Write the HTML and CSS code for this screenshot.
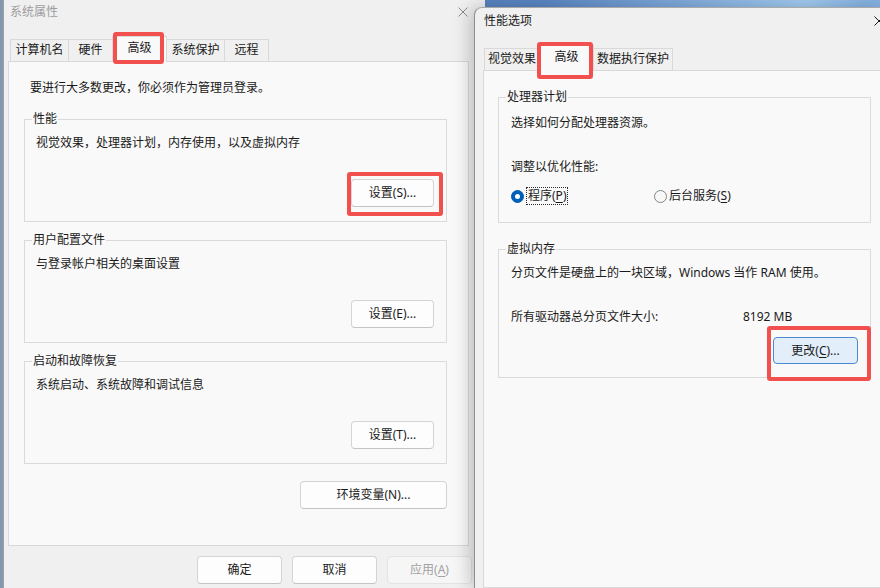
FILE: index.html
```html
<!DOCTYPE html>
<html lang="zh-CN">
<head>
<meta charset="utf-8">
<title>系统属性</title>
<link rel="stylesheet" href="styles.css">
</head>
<body>
<div class="desktop">
  <section class="window win-left">
    <header class="titlebar inactive">
      <span class="title">系统属性</span>
      <svg class="close" width="10" height="10" viewBox="0 0 10 10"><path d="M0.5 0.5 L9.5 9.5 M9.5 0.5 L0.5 9.5" stroke="#8c8c8c" stroke-width="1" fill="none"/></svg>
    </header>
    <nav class="tabs">
      <div class="tab">计算机名</div>
      <div class="tab">硬件</div>
      <div class="tab active">高级</div>
      <div class="tab">系统保护</div>
      <div class="tab">远程</div>
    </nav>
    <div class="panel panel-left">
      <p class="note">要进行大多数更改，你必须作为管理员登录。</p>
      <div class="group group-left">
        <span class="legend">性能</span>
        <p class="desc">视觉效果，处理器计划，内存使用，以及虚拟内存</p>
        <button class="btn btn-set">设置(S)...</button>
      </div>
      <div class="group group-left">
        <span class="legend">用户配置文件</span>
        <p class="desc">与登录帐户相关的桌面设置</p>
        <button class="btn btn-set">设置(E)...</button>
      </div>
      <div class="group group-left">
        <span class="legend">启动和故障恢复</span>
        <p class="desc">系统启动、系统故障和调试信息</p>
        <button class="btn btn-set">设置(T)...</button>
      </div>
      <div class="env-row">
        <button class="btn btn-env">环境变量(N)...</button>
      </div>
    </div>
    <div class="dialog-buttons">
      <button class="btn btn-dlg">确定</button>
      <button class="btn btn-dlg">取消</button>
      <button class="btn btn-dlg disabled">应用(<u>A</u>)</button>
    </div>
  </section>

  <section class="window win-right">
    <header class="titlebar">
      <span class="title">性能选项</span>
      <svg class="close" width="10" height="10" viewBox="0 0 10 10"><path d="M0.5 0.5 L9.5 9.5 M9.5 0.5 L0.5 9.5" stroke="#1a1a1a" stroke-width="1" fill="none"/></svg>
    </header>
    <nav class="tabs">
      <div class="tab">视觉效果</div>
      <div class="tab active">高级</div>
      <div class="tab">数据执行保护</div>
    </nav>
    <div class="panel panel-right">
      <div class="group group-cpu">
        <span class="legend">处理器计划</span>
        <p class="desc">选择如何分配处理器资源。</p>
        <p class="desc gap">调整以优化性能:</p>
        <div class="radios">
          <div class="radio-opt first">
            <span class="dot checked"></span>
            <span class="focus">程序(<u>P</u>)</span>
          </div>
          <div class="radio-opt">
            <span class="dot"></span>
            <span class="rlabel">后台服务(<u>S</u>)</span>
          </div>
        </div>
      </div>
      <div class="group group-vm">
        <span class="legend">虚拟内存</span>
        <p class="desc">分页文件是硬盘上的一块区域，Windows 当作 RAM 使用。</p>
        <div class="size-row gap">
          <span class="size-label">所有驱动器总分页文件大小:</span>
          <span class="size-value">8192 MB</span>
        </div>
        <button class="btn btn-change">更改(<u>C</u>)...</button>
      </div>
    </div>
  </section>

  <div class="mark mark-tab-left"></div>
  <div class="mark mark-btn-left"></div>
  <div class="mark mark-tab-right"></div>
  <div class="mark mark-btn-right"></div>
</div>
</body>
</html>
```

FILE: styles.css
```css
* { box-sizing: border-box; }

html, body { margin: 0; padding: 0; }

body {
  width: 880px;
  height: 588px;
  overflow: hidden;
  font-family: "Noto Sans", "Noto Sans CJK SC", sans-serif;
  font-size: 12px;
  line-height: 16px;
  color: #1a1a1a;
  background:
    linear-gradient(to right, #8497ae 0, #8497ae 3px, transparent 3px),
    linear-gradient(100deg, #3f6aa4 0%, #5b87c5 55%, #a3cdf3 82%, #5383c3 100%);
}

p { margin: 0; }
u { text-decoration: underline; text-underline-offset: 2px; }

.desktop {
  position: relative;
  width: 880px;
  height: 588px;
  overflow: hidden;
}

/* windows on the desktop */
.window {
  position: absolute;
  background: #f0f0f0;
  overflow: hidden;
}

.win-left {
  left: 3px;
  top: 0;
  width: 482px;
  height: 588px;
  border-left: 1px solid #9aa3ad;
}

.win-right {
  left: 474px;
  top: 7px;
  width: 406px;
  height: 581px;
  border-left: 1px solid #8e8e8e;
  border-top: 1px solid #a9a9a9;
  border-top-left-radius: 8px;
  box-shadow: -4px 0 18px rgba(0, 0, 0, 0.22);
}

/* title bars */
.titlebar {
  display: flex;
  align-items: center;
  justify-content: space-between;
}

.win-left .titlebar {
  height: 24px;
  padding: 0 17px 0 6px;
}

.win-right .titlebar {
  height: 26px;
  padding: 0 0 0 9px;
}

.win-right .close { margin-right: -4px; }

.titlebar.inactive .title { color: #9d9d9d; }

.close { display: block; flex: none; }

/* tabs */
.tabs {
  display: flex;
  align-items: flex-start;
  height: 26px;
  position: relative;
  z-index: 1;
}

.win-left .tabs { margin-top: 12px; padding-left: 6px; }
.win-right .tabs { margin-top: 11px; padding-left: 9px; }

.tab {
  height: 22px;
  margin-top: 3px;
  margin-left: -1px;
  min-width: 45px;
  padding: 0 4.5px;
  border: 1px solid #d9d9d9;
  border-bottom: none;
  background: #f0f0f0;
  text-align: center;
  line-height: 20px;
  white-space: nowrap;
}

.tab:first-child { margin-left: 0; }

.win-right .tab { padding: 0 3px; }

.tab.active {
  height: 26px;
  margin-top: 0;
  min-width: 55px;
  background: #f9f9f9;
  line-height: 22px;
  position: relative;
  z-index: 2;
}

/* tab panels */
.panel {
  background: #f9f9f9;
  border: 1px solid #d9d9d9;
  margin-top: -1px;
}

.panel-left {
  margin-left: 4px;
  width: 461px;
  height: 485px;
  padding: 18px 21px 0 15px;
}

.panel-right {
  margin-left: 8px;
  width: 420px;
  height: 518px;
  padding: 26px 0 0 14px;
}

.note { padding-left: 6px; }

/* group boxes */
.group {
  position: relative;
  border: 1px solid #dadada;
  display: flex;
  flex-direction: column;
}

.legend {
  position: absolute;
  top: -9px;
  left: 7px;
  padding: 0 1px;
  background: #f9f9f9;
  line-height: 16px;
}

.group-left {
  height: 103px;
  margin-top: 18px;
  padding: 15px 12px 0 11px;
}

.note + .group-left { margin-top: 23px; }

.group-left .btn-set {
  align-self: flex-end;
  margin-top: 28px;
}

.group-cpu {
  width: 373px;
  height: 126px;
  padding: 17px 12px 0 12px;
}

.group-vm {
  width: 373px;
  height: 129px;
  margin-top: 26px;
  padding: 15px 12px 0 12px;
}

.gap { margin-top: 28px; }

/* radios */
.radios {
  display: flex;
  align-items: center;
  height: 18px;
  margin-top: 12px;
}

.radio-opt {
  display: flex;
  align-items: center;
}

.radio-opt.first { width: 143px; }

.dot {
  width: 13px;
  height: 13px;
  border-radius: 50%;
  border: 1px solid #858585;
  background: #f7f7f7;
  margin-right: 2px;
  display: flex;
  align-items: center;
  justify-content: center;
}

.dot.checked {
  background: #005fb8;
  border-color: #005fb8;
}

.dot.checked::after {
  content: "";
  width: 5px;
  height: 5px;
  border-radius: 50%;
  background: #ffffff;
}

.focus {
  border: 1px dotted #2a2a2a;
  height: 18px;
  line-height: 16px;
  padding: 0 1px;
}

/* virtual memory */
.size-row { display: flex; }
.size-label { width: 232px; }

/* buttons */
.btn {
  font: inherit;
  color: #1a1a1a;
  background: #fdfdfd;
  border: 1px solid #d4d4d4;
  border-bottom-color: #c4c4c4;
  border-radius: 4px;
  height: 28px;
  padding: 0;
  line-height: 16px;
  text-align: center;
}

.btn-set { width: 83px; }

.env-row {
  display: flex;
  justify-content: flex-end;
  margin-top: 17px;
}

.btn-env { width: 147px; }

.dialog-buttons {
  display: flex;
  gap: 10px;
  margin-top: 10px;
  padding-left: 193px;
}

.btn-dlg { width: 85px; }

.btn-dlg.disabled {
  color: #a2a2a2;
  background: #f6f6f6;
  border-color: #e3e3e3;
}

.btn-change {
  align-self: flex-end;
  width: 85px;
  height: 27px;
  margin-top: 12px;
  background: #e2eefa;
  border: 1px solid #4b8ad0;
}

/* red annotation boxes over the screenshot */
.mark {
  position: absolute;
  border: 4px solid #f2504f;
  border-radius: 3px;
  z-index: 10;
}

.mark-tab-left { left: 113px; top: 32px; width: 51px; height: 32px; }
.mark-btn-left { left: 347px; top: 172px; width: 96px; height: 44px; }
.mark-tab-right { left: 537px; top: 42px; width: 56px; height: 37px; }
.mark-btn-right { left: 767px; top: 326px; width: 104px; height: 55px; }
```
